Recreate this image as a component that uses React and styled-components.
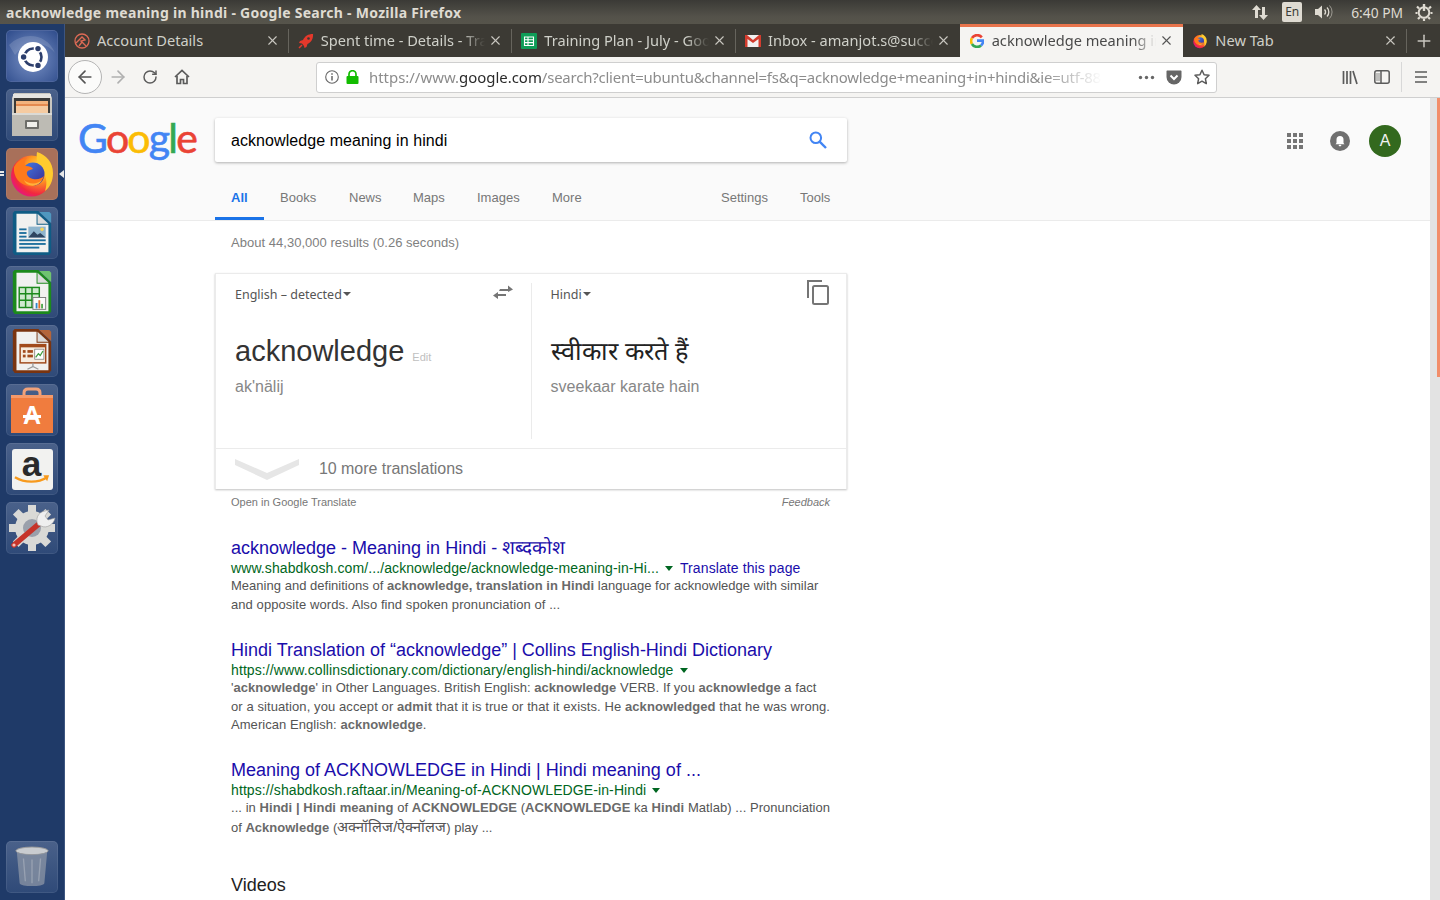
import React from 'react'
import styled, { createGlobalStyle } from 'styled-components'
import { X, Plus, ArrowLeft, ArrowRight, RotateCw } from 'lucide-react'

const GlobalStyle = createGlobalStyle`
html, body {
  margin: 0;
  padding: 0;
  overflow: hidden;
}
* { box-sizing: border-box; }
`

const UI_FONT = `"Noto Sans", "Open Sans", sans-serif`
const PAGE_FONT = `"Liberation Sans", Arial, sans-serif`

const Screen = styled.div`
width: 1440px;
height: 900px;
overflow: hidden;
display: flex;
flex-direction: column;
background: #fff;
font-family: ${PAGE_FONT};
`

/* ---------- ubuntu top panel ---------- */
const Panel = styled.div`
height: 24px;
flex: none;
display: flex;
align-items: center;
justify-content: space-between;
padding: 0 3px 0 6px;
background: linear-gradient(#3b3a36, #54524a 70%, #56544b);
`
const WindowTitle = styled.div`
font-family: ${UI_FONT};
font-size: 14px;
font-weight: 700;
letter-spacing: 0.28px;
color: #dfdbd2;
white-space: nowrap;
`
const Indicators = styled.div`
display: flex;
align-items: center;
`
const Indicator = styled.div`
width: ${p => p.$w}px;
height: 24px;
margin-left: ${p => p.$ml || 0}px;
display: flex;
align-items: center;
justify-content: center;
`
const LangBox = styled.div`
width: 20px;
height: 20px;
border-radius: 2px;
background: #dfdbd2;
color: #3c3b37;
font-family: ${UI_FONT};
font-size: 12px;
text-align: center;
line-height: 20px;
`
const Clock = styled.div`
font-family: ${UI_FONT};
font-size: 13.8px;
color: #dfdbd2;
white-space: nowrap;
margin: 0 8px 0 10px;
`

const Body = styled.div`
flex: 1;
display: flex;
min-height: 0;
`

/* ---------- launcher ---------- */
const Launcher = styled.div`
width: 65px;
flex: none;
display: flex;
flex-direction: column;
align-items: flex-start;
gap: 7px;
padding: 6px 0 6px 6px;
background: #1f3a68;
border-right: 1px solid #3d5580;
`
const Tile = styled.div`
position: relative;
width: 52px;
height: 52px;
flex: none;
border-radius: 5px;
background: ${p => p.$bg || 'linear-gradient(#4a618a, #2f4a78)'};
box-shadow: inset 0 0 0 1px rgba(255,255,255,0.08);
display: flex;
align-items: center;
justify-content: center;
`
const TrashTile = styled(Tile)`
margin-top: auto;
margin-bottom: 1px;
`
const RunDots = styled.div`
position: absolute;
left: -6px;
top: 23px;
width: 4px;
height: 6px;
background: repeating-linear-gradient(#e8e8e8 0 2px, transparent 2px 3px);
`
const ActiveArrow = styled.div`
position: absolute;
right: -6px;
top: 22px;
width: 0;
height: 0;
border-top: 4px solid transparent;
border-bottom: 4px solid transparent;
border-right: 5px solid #e8e8e8;
`

/* ---------- firefox chrome ---------- */
const Browser = styled.div`
flex: 1;
min-width: 0;
display: flex;
flex-direction: column;
`
const TabStrip = styled.div`
height: 33px;
flex: none;
display: flex;
background: #3c3a34;
`
const Tab = styled.div`
flex: 1 1 0;
min-width: 0;
height: 33px;
display: flex;
align-items: center;
gap: 7px;
padding: 0 9px ${p => (p.$active ? 3 : 0)}px 9px;
position: relative;
background: ${p => (p.$active ? '#f5f4f2' : 'transparent')};
border-top: ${p => (p.$active ? '3px solid #e8744c' : 'none')};
&::after {
  content: '';
  display: ${p => (p.$noSep ? 'none' : 'block')};
  position: absolute;
  right: 0;
  top: 5px;
  bottom: 4px;
  width: 1px;
  background: #66645d;
}
`
const TabIcon = styled.div`
width: 16px;
height: 16px;
flex: none;
margin-left: ${p => p.$ml || 0}px;
display: flex;
align-items: center;
justify-content: center;
`
const TabTitle = styled.div`
flex: 1;
min-width: 0;
margin: 0 -4px 2px 0;
overflow: hidden;
white-space: nowrap;
font-family: ${UI_FONT};
font-size: 14.6px;
color: ${p => (p.$active ? '#4a4a4a' : '#cfd0c9')};
-webkit-mask-image: ${p => (p.$fade ? 'linear-gradient(to right, #000 86%, transparent 100%)' : 'none')};
mask-image: ${p => (p.$fade ? 'linear-gradient(to right, #000 86%, transparent 100%)' : 'none')};
`
const NewTab = styled.div`
width: 33px;
flex: none;
display: flex;
align-items: center;
justify-content: center;
color: #c8c6bf;
`

const Toolbar = styled.div`
height: 41px;
flex: none;
display: flex;
align-items: center;
padding: 0 3px;
background: #f5f4f2;
border-bottom: 1px solid #cfcfcf;
`
const BackButton = styled.div`
width: 34px;
height: 34px;
flex: none;
border-radius: 50%;
border: 1px solid #b4b4b4;
background: #fbfbfa;
display: flex;
align-items: center;
justify-content: center;
color: #555;
`
const ToolButton = styled.div`
width: 32px;
height: 32px;
flex: none;
display: flex;
align-items: center;
justify-content: center;
color: ${p => p.$color || '#5b5b5b'};
`
const ToolSpacer = styled.div`
width: 118px;
flex: none;
`
const UrlBar = styled.div`
width: 901px;
height: 31px;
flex: none;
display: flex;
align-items: center;
background: #fff;
border: 1px solid #cfcfcf;
border-radius: 3px;
padding: 0 0 0 8px;
`
const UrlText = styled.div`
flex: 1;
min-width: 0;
margin: 0 30px 0 9px;
overflow: hidden;
white-space: nowrap;
font-family: ${UI_FONT};
font-size: 14.93px;
color: #8c8c8c;
-webkit-mask-image: linear-gradient(to right, #000 92%, transparent 100%);
mask-image: linear-gradient(to right, #000 92%, transparent 100%);
b { font-weight: 400; color: #2a2a2a; }
`
const UrlPath = styled.span`
letter-spacing: -0.2px;
`
const UrlAction = styled.div`
width: 28px;
height: 28px;
flex: none;
display: flex;
align-items: center;
justify-content: center;
`
const Grow = styled.div`
flex: 1;
`
const ToolSep = styled.div`
width: 1px;
height: 30px;
flex: none;
margin: 0 3px;
background: #d8d8d8;
`

/* ---------- page ---------- */
const PageArea = styled.div`
flex: 1;
min-height: 0;
display: flex;
`
const Page = styled.div`
flex: 1;
min-width: 0;
overflow: hidden;
`
const Scrollbar = styled.div`
width: 10px;
flex: none;
display: flex;
justify-content: flex-end;
background: #e3e3e3;
`
const ScrollThumb = styled.div`
width: 3px;
height: 279px;
background: #f28e6b;
`
const Header = styled.div`
height: 123px;
background: #fafafa;
border-bottom: 1px solid #ebebeb;
display: flex;
flex-direction: column;
`
const HeaderTop = styled.div`
display: flex;
align-items: flex-start;
padding-top: 20px;
height: 92px;
`
const Logo = styled.div`
width: 150px;
flex: none;
padding-left: 13px;
margin-top: -4px;
font-family: Lato, sans-serif;
font-size: 41px;
line-height: 48px;
letter-spacing: -1.8px;
-webkit-text-stroke: 0.6px;
white-space: nowrap;
`
const LogoLetter = styled.span`
color: ${p => p.$c};
`
const SearchBox = styled.div`
width: 632px;
height: 44px;
flex: none;
display: flex;
align-items: center;
justify-content: space-between;
padding: 0 19px 0 16px;
background: #fff;
border-radius: 2px;
box-shadow: 0 1px 3px rgba(0,0,0,0.3);
font-size: 16px;
color: #000;
`
const SearchText = styled.span`
margin-top: 2px;
letter-spacing: 0.07px;
`
const AccountIcons = styled.div`
flex: 1;
display: flex;
align-items: center;
justify-content: flex-end;
height: 44px;
margin: 1px 29px 0 0;
`
const AppsGrid = styled.div`
width: 16px;
height: 16px;
display: grid;
grid-template-columns: repeat(3, 4px);
grid-auto-rows: 4px;
gap: 2px;
margin-right: 27px;
span { background: #757575; }
`
const Bell = styled.div`
width: 20px;
height: 20px;
border-radius: 50%;
background: #707070;
display: flex;
align-items: center;
justify-content: center;
margin-right: 19px;
`
const Avatar = styled.div`
width: 32px;
height: 32px;
border-radius: 50%;
background: #33691e;
color: #f2f2f2;
font-size: 16px;
display: flex;
align-items: center;
justify-content: center;
`
const Nav = styled.div`
display: flex;
height: 30px;
padding-left: 150px;
font-size: 13px;
color: #777;
`
const NavItem = styled.div`
width: ${p => p.$w}px;
padding-left: 16px;
margin-left: ${p => p.$ml || 0}px;
height: 30px;
font-weight: ${p => (p.$active ? 700 : 400)};
color: ${p => (p.$active ? '#1a73e8' : '#777')};
border-bottom: ${p => (p.$active ? '3px solid #1a73e8' : 'none')};
line-height: 15px;
white-space: nowrap;
`
const Column = styled.div`
width: 782px;
padding-left: 150px;
`
const Stats = styled.div`
height: 52px;
padding: 14px 0 0 16px;
font-size: 13px;
line-height: 15px;
letter-spacing: 0.03px;
color: #808080;
`
const Card = styled.div`
width: 632px;
height: 216px;
background: #fff;
border: 1px solid #ebebeb;
border-bottom: none;
box-shadow: 0 1px 2px rgba(0,0,0,0.25);
display: flex;
flex-direction: column;
`
const CardMain = styled.div`
height: 175px;
flex: none;
display: flex;
border-bottom: 1px solid #ebebeb;
padding-top: 9px;
`
const CardPane = styled.div`
width: ${p => p.$w}px;
height: 156px;
padding: 0 0 0 ${p => p.$pad}px;
border-right: ${p => (p.$divider ? '1px solid #ebebeb' : 'none')};
position: relative;
`
const LangRow = styled.div`
display: flex;
align-items: center;
height: 22px;
font-family: ${UI_FONT};
font-size: 12.5px;
color: #555;
`
const Caret = styled.span`
width: 0;
height: 0;
margin-left: 1px;
border-left: 4px solid transparent;
border-right: 4px solid transparent;
border-top: 4px solid #555;
`
const PaneIcon = styled.div`
position: absolute;
top: ${p => p.$top}px;
right: ${p => p.$right}px;
display: flex;
`
const SourceRow = styled.div`
display: flex;
align-items: baseline;
gap: 8px;
margin-top: 26px;
height: 40px;
font-size: ${p => p.$size}px;
line-height: 40px;
color: ${p => p.$color};
`
const EditLink = styled.span`
font-size: 11px;
color: #c0c0c0;
`
const Translit = styled.div`
margin-top: 6px;
font-size: 16px;
line-height: 20px;
letter-spacing: 0.02px;
color: #878787;
`
const CardFooter = styled.div`
height: 41px;
display: flex;
align-items: center;
font-size: 16px;
letter-spacing: -0.05px;
color: #777;
padding-left: 18px;
gap: 19px;
`
const CardNotes = styled.div`
width: 632px;
height: 48px;
padding: 5px 17px 0 16px;
display: flex;
justify-content: space-between;
font-size: 11px;
line-height: 16px;
color: #777;
i { font-style: italic; }
`
const Result = styled.div`
width: 632px;
padding-left: 16px;
margin-bottom: ${p => p.$mb ?? 24}px;
`
const ResultTitle = styled.div`
font-size: 18px;
line-height: 22px;
color: #1a0dab;
white-space: nowrap;
`
const WideScript = styled.span`
font-size: ${p => p.$size}px;
`
const ResultUrl = styled.div`
display: flex;
align-items: center;
height: 18px;
font-size: 14px;
letter-spacing: 0.1px;
color: #006621;
white-space: nowrap;
`
const UrlCaret = styled.span`
width: 0;
height: 0;
margin: 1px 6px 0 6px;
border-left: 4px solid transparent;
border-right: 4px solid transparent;
border-top: 5px solid #006621;
`
const TranslateLink = styled.span`
color: #1a0dab;
margin-left: 1px;
`
const Snippet = styled.div`
font-size: 13px;
line-height: 18.6px;
color: #545454;
white-space: nowrap;
b { font-weight: 700; color: #6a6a6a; }
`
const SnippetLine = styled.div`
height: 18.6px;
letter-spacing: ${p => p.$ls || 0}px;
`
const SectionTitle = styled.div`
margin: 37px 0 0 16px;
font-size: 18px;
line-height: 24px;
color: #222;
`

/* ---------- launcher icons ---------- */
const UbuntuIcon = () => (
  <svg width="50" height="50" viewBox="0 0 50 50">
    <defs>
      <radialGradient id="ub" cx="50%" cy="55%" r="70%">
        <stop offset="0" stopColor="#7b93c7" />
        <stop offset="1" stopColor="#33508f" />
      </radialGradient>
    </defs>
    <rect x="0" y="0" width="50" height="50" rx="4" fill="url(#ub)" />
    <path d="M2 14C16 0 40 2 48 22C38 10 20 8 8 24Z" fill="#fff" opacity=".14" />
    <circle cx="26" cy="26" r="15" fill="#fff" />
    <circle cx="26" cy="26" r="8.5" fill="none" stroke="#2c3e6c" strokeWidth="2.6" />
    <circle cx="17" cy="26" r="3.9" fill="#fff" />
    <circle cx="30.6" cy="18" r="3.9" fill="#fff" />
    <circle cx="30.6" cy="34" r="3.9" fill="#fff" />
    <circle cx="16.6" cy="26" r="2.7" fill="#2c3e6c" />
    <circle cx="31" cy="17.6" r="2.7" fill="#2c3e6c" />
    <circle cx="31" cy="34.4" r="2.7" fill="#2c3e6c" />
  </svg>
)
const FilesIcon = () => (
  <svg width="42" height="44" viewBox="0 0 42 44">
    <path d="M3 0h36l2 5v36l-1 2H2l-1-2V5z" fill="#c9c7c0" />
    <rect x="2" y="1" width="38" height="4" fill="#e6e5e0" />
    <rect x="3" y="5" width="36" height="15" fill="#3a3a38" />
    <rect x="5" y="8" width="32" height="3" fill="#f2b37e" />
    <rect x="5" y="11" width="32" height="2" fill="#e48a50" />
    <rect x="5" y="13" width="32" height="7" fill="#f5cba1" />
    <rect x="1" y="20" width="40" height="23" fill="#bdbbb4" />
    <rect x="1" y="20" width="40" height="2" fill="#dbdad5" />
    <rect x="14" y="27" width="14" height="9" rx="1" fill="#6e6e6a" />
    <rect x="16" y="29" width="10" height="5" fill="#f1f0ec" />
  </svg>
)
const FirefoxIcon = ({ size = 50, id = 'ff' }) => (
  <svg width={size} height={size} viewBox="0 0 50 50">
    <defs>
      <radialGradient id={id + 'a'} cx="70%" cy="30%" r="80%">
        <stop offset="0" stopColor="#ffe14a" />
        <stop offset=".4" stopColor="#ff9a1f" />
        <stop offset=".8" stopColor="#f1283f" />
        <stop offset="1" stopColor="#e31587" />
      </radialGradient>
      <linearGradient id={id + 'b'} x1="0" y1="0" x2="1" y2="1">
        <stop offset="0" stopColor="#3f7fe8" />
        <stop offset="1" stopColor="#3b2a90" />
      </linearGradient>
    </defs>
    <circle cx="24.5" cy="27" r="20.5" fill={`url(#${id}a)`} />
    <path d="M30 3c9 3 16 10 16 21 0 8-3 14-8 18 2-6 2-12-1-17-2-4-6-7-7-12-.5-3-.5-7 0-10z" fill="#ffcb2e" />
    <circle cx="26" cy="25" r="11.5" fill={`url(#${id}b)`} />
    <path d="M7 18c3-6 9-9 13-9-3 3-3 6-1 8 3 0 6 1 7 3-2 1-5 1-6 3-1 3 2 6 6 7 5 1 9-1 11-3-2 6-8 11-15 10-9-1-16-9-15-19z" fill="#ff7a1a" />
    <path d="M17 31c4 4 13 5 18 0-3 7-15 8-18 0z" fill="#ffb13b" />
  </svg>
)
const DocIcon = ({ border, corner, children }) => (
  <svg width="42" height="50" viewBox="0 0 46 50">
    <path d="M4 1h26l14 14v31l-2 3H4l-2-3V3z" fill={border} />
    <path d="M6 4h22v12h13v30H6z" fill="#f1f1f0" />
    <path d="M31 2l13 12V4l-2-2z" fill={corner} />
    <path d="M29 4l12 11H29z" fill="#dcdcdc" />
    {children}
  </svg>
)
const WriterIcon = () => (
  <DocIcon border="#0f5c85" corner="#4f97bf">
    <g fill="#1b6d9c">
      <rect x="9" y="20" width="8" height="2" />
      <rect x="9" y="24" width="8" height="2" />
      <rect x="9" y="28" width="8" height="2" />
      <rect x="9" y="32" width="29" height="2" />
      <rect x="9" y="36" width="29" height="2" />
      <rect x="9" y="40" width="22" height="2" />
    </g>
    <rect x="19" y="18" width="19" height="12" fill="#8fb5cd" />
    <path d="M19 30l6-7 4 4 3-2 6 5z" fill="#2e4560" />
    <circle cx="34" cy="21" r="2" fill="#f4d35e" />
  </DocIcon>
)
const CalcIcon = () => (
  <DocIcon border="#1c8a1c" corner="#6fc46f">
    <g stroke="#1c8a1c" strokeWidth="1.6" fill="#cfe9cf">
      <rect x="9" y="20" width="22" height="22" />
      <path d="M9 27h22M9 34h22M16 20v22M23 20v22" fill="none" />
    </g>
    <rect x="24" y="31" width="14" height="13" fill="#fafafa" stroke="#777" />
    <rect x="27" y="37" width="2" height="6" fill="#2f86c9" />
    <rect x="30" y="34" width="2" height="9" fill="#e2702c" />
    <rect x="33" y="38" width="2" height="5" fill="#4da64d" />
  </DocIcon>
)
const ImpressIcon = () => (
  <DocIcon border="#7a3410" corner="#b5653a">
    <rect x="10" y="18" width="28" height="20" fill="#f7ecdf" stroke="#a14a1c" strokeWidth="1.6" />
    <rect x="10" y="18" width="28" height="3" fill="#a14a1c" />
    <g fill="#a14a1c">
      <rect x="13" y="24" width="3" height="3" />
      <rect x="13" y="29" width="3" height="3" />
      <rect x="18" y="24" width="6" height="3" />
      <rect x="18" y="29" width="6" height="3" />
    </g>
    <rect x="26" y="23" width="10" height="11" fill="#fff" stroke="#777" strokeWidth=".8" />
    <path d="M27 32l3-4 2 2 3-5" fill="none" stroke="#3f9c3f" strokeWidth="1.4" />
    <path d="M24 38v4l-6 3M24 42l6 3" stroke="#9a9a9a" strokeWidth="1.4" fill="none" />
  </DocIcon>
)
const SoftwareIcon = () => (
  <svg width="42" height="46" viewBox="0 0 42 46">
    <path d="M13 12V6c0-3 2-4 4-4h8c2 0 4 1 4 4v6" fill="none" stroke="#f0a27a" strokeWidth="3" />
    <rect x="0" y="8" width="42" height="38" fill="#f07c3e" />
    <rect x="0" y="8" width="42" height="3" fill="#f59a6a" />
    <text x="21" y="37" textAnchor="middle" fontFamily="Liberation Sans" fontWeight="700" fontSize="25" fill="#fff">A</text>
    <rect x="12" y="28" width="18" height="3" fill="#fff" />
  </svg>
)
const AmazonIcon = () => (
  <svg width="41" height="41" viewBox="0 0 42 42" overflow="visible">
    <rect width="42" height="42" rx="3" fill="#f2f2f0" />
    <text x="20" y="28" textAnchor="middle" fontFamily="Liberation Sans" fontWeight="700" fontSize="36" fill="#2a2a2a">a</text>
    <path d="M3 29c10 6 24 6 33 0" fill="none" stroke="#f79a1d" strokeWidth="2.4" />
    <path d="M32 27l6 0-2 6z" fill="#f79a1d" />
  </svg>
)
const SettingsIcon = () => (
  <svg width="48" height="48" viewBox="0 0 48 48">
    <g fill="#d9d9d6">
      <circle cx="24" cy="24" r="17" />
      {[0, 45, 90, 135, 180, 225, 270, 315].map(a => (
        <rect key={a} x="20" y="1" width="8" height="8" transform={`rotate(${a} 24 24)`} />
      ))}
    </g>
    <circle cx="24" cy="24" r="9" fill="#9aa0ab" />
    <path d="M6 41L32 19" stroke="#c6342a" strokeWidth="5.5" strokeLinecap="round" />
    <circle cx="6" cy="41" r="1.6" fill="#f4c0bb" />
    <path d="M30 21c-3-6 0-13 7-14l4-1-4 6 3 4 7-2c-1 6-8 11-14 8z" fill="#efefef" stroke="#9a9a9a" strokeWidth=".6" />
  </svg>
)
const TrashIcon = () => (
  <svg width="38" height="46" viewBox="0 0 40 46">
    <ellipse cx="20" cy="6" rx="17" ry="4" fill="#c9ccd0" stroke="#9a9a9a" />
    <path d="M4 7l3 33c1 4 25 4 26 0l3-33c-4 4-28 4-32 0z" fill="#8c96a6" opacity=".75" />
    <path d="M11 14l2 24M20 15v25M29 14l-2 24" stroke="#b7bdc7" strokeWidth="1.4" opacity=".5" />
  </svg>
)

/* ---------- tab and toolbar icons ---------- */
const AccountFav = () => (
  <svg width="16" height="16" viewBox="0 0 16 16" fill="none" stroke="#dd6a55" strokeWidth="1.3">
    <circle cx="8" cy="8" r="7" />
    <path d="M2 10l6-6 3 3-4 1 5 5M5 13l3-4" />
  </svg>
)
const RocketFav = () => (
  <svg width="16" height="16" viewBox="0 0 16 16">
    <path d="M15 1c-5 0-8 2-10 6L2 8 1 10l3 .5L6 13l.5 2 2-1 1-3c4-2 6-5 5.5-11z" fill="#e5382b" />
    <circle cx="10.5" cy="5.5" r="1.3" fill="#3c3a34" />
    <path d="M1 15l3-3" stroke="#e5382b" strokeWidth="1.5" />
  </svg>
)
const SheetFav = () => (
  <svg width="16" height="16" viewBox="0 0 16 16">
    <rect width="16" height="16" rx="1" fill="#0f9d58" />
    <path d="M3.5 4h9v8.5h-9zM3.5 6.8h9M3.5 9.6h9M7 4v8.5" fill="none" stroke="#fff" strokeWidth="1.1" />
  </svg>
)
const GmailFav = () => (
  <svg width="16" height="14" viewBox="0 0 16 14">
    <rect y="1" width="16" height="12" fill="#f1f1f1" />
    <path d="M0 1h2l6 5 6-5h2v12h-2.5V5L8 9 2.5 5v8H0z" fill="#d23c2e" />
  </svg>
)
const GoogleFav = () => (
  <svg width="14" height="14" viewBox="0 0 16 16" fill="none" strokeWidth="3">
    <path d="M13.5 3.8A7 7 0 0 0 2.2 4.6" stroke="#ea4335" />
    <path d="M2.2 4.6a7 7 0 0 0 0 6.8" stroke="#fbbc05" />
    <path d="M2.2 11.4a7 7 0 0 0 10.4 1.8" stroke="#34a853" />
    <path d="M12.6 13.2A7 7 0 0 0 15 7.5H8" stroke="#4285f4" />
  </svg>
)
const NetArrows = () => (
  <svg width="18" height="18" viewBox="0 0 18 18" fill="#dfdbd2">
    <path d="M5.5 2L1 7h3v8h3V7h3z" />
    <path d="M12.5 17L8 12h3V4h3v8h3z" />
  </svg>
)
const Speaker = () => (
  <svg width="20" height="16" viewBox="0 0 20 16" fill="none" stroke="#dfdbd2">
    <path d="M1 5h3l4-3.5v13L4 11H1z" fill="#dfdbd2" stroke="none" />
    <path d="M10.5 5.5a3.5 3.5 0 0 1 0 5" strokeWidth="1.4" />
    <path d="M13 3.5a6.5 6.5 0 0 1 0 9" strokeWidth="1.3" />
    <path d="M15.5 1.5a9.5 9.5 0 0 1 0 13" strokeWidth="1" opacity=".55" />
  </svg>
)
const PowerGear = () => (
  <svg width="18" height="18" viewBox="0 0 18 18" fill="none" stroke="#dfdbd2">
    <circle cx="9" cy="9.5" r="5.3" strokeWidth="2" />
    <path d="M9 1v7" strokeWidth="2.4" />
    <g strokeWidth="2.2">
      <path d="M2 3.5l2 2M16 3.5l-2 2M0.5 10h2M15.5 10h2M3 16l1.8-1.8M15 16l-1.8-1.8M9 15.5V18" />
    </g>
  </svg>
)
const HomeIcon = () => (
  <svg width="16" height="16" viewBox="0 0 16 16" fill="none" stroke="#5b5b5b" strokeWidth="1.7">
    <path d="M1 8l7-6.5L15 8" />
    <path d="M3 7v7.5h3.5v-4h3v4H13V7" />
  </svg>
)
const InfoIcon = () => (
  <svg width="14" height="14" viewBox="0 0 14 14" fill="none" stroke="#666">
    <circle cx="7" cy="7" r="6.3" strokeWidth="1.1" />
    <path d="M7 6v4.5M7 3.3v1.5" strokeWidth="1.5" />
  </svg>
)
const LockIcon = () => (
  <svg width="13" height="14" viewBox="0 0 13 14">
    <path d="M3 6V4.2a3.5 3.5 0 0 1 7 0V6" fill="none" stroke="#12bc00" strokeWidth="1.7" />
    <rect x="0.5" y="6" width="12" height="8" rx="1" fill="#12bc00" />
  </svg>
)
const MoreDots = () => (
  <svg width="17" height="5" viewBox="0 0 17 5" fill="#666">
    <circle cx="2.5" cy="2.5" r="1.7" />
    <circle cx="8.5" cy="2.5" r="1.7" />
    <circle cx="14.5" cy="2.5" r="1.7" />
  </svg>
)
const PocketIcon = () => (
  <svg width="16" height="15" viewBox="0 0 16 15">
    <path d="M1.5 0.5h13c.6 0 1 .4 1 1V7a7.5 7.5 0 0 1-15 0V1.5c0-.6.4-1 1-1z" fill="#666" />
    <path d="M4.5 5.5L8 9l3.5-3.5" fill="none" stroke="#fff" strokeWidth="2" />
  </svg>
)
const StarIcon = () => (
  <svg width="16" height="16" viewBox="0 0 16 16" fill="none" stroke="#5b5b5b" strokeWidth="1.5" strokeLinejoin="round">
    <path d="M8 1.2l2.1 4.5 4.9.6-3.6 3.4.9 4.9L8 12.2l-4.3 2.4.9-4.9L1 6.3l4.9-.6z" />
  </svg>
)
const LibraryIcon = () => (
  <svg width="16" height="15" viewBox="0 0 16 15" fill="none" stroke="#5b5b5b" strokeWidth="1.7">
    <path d="M1.5 1v13M5 1v13M8.5 1v13M11 1l4 13" />
  </svg>
)
const SidebarIcon = () => (
  <svg width="16" height="14" viewBox="0 0 16 14" fill="none" stroke="#5b5b5b" strokeWidth="1.5">
    <rect x="0.8" y="0.8" width="14.4" height="12.4" rx="2" />
    <path d="M7 1v12" />
    <path d="M2 3h4v8H2z" fill="#5b5b5b" stroke="none" opacity=".35" />
  </svg>
)
const MenuIcon = () => (
  <svg width="14" height="12" viewBox="0 0 14 12" fill="none" stroke="#5b5b5b" strokeWidth="1.7">
    <path d="M1 1h12M1 6h12M1 11h12" />
  </svg>
)
const SearchIcon = () => (
  <svg width="20" height="20" viewBox="0 0 20 20" fill="none" stroke="#4285f4" strokeWidth="2">
    <circle cx="7.8" cy="7.8" r="5.3" />
    <path d="M11.6 11.6l6.4 6.4" strokeWidth="2.4" />
  </svg>
)
const BellIcon = () => (
  <svg width="12" height="12" viewBox="0 0 12 12" fill="#fff">
    <path d="M6 1a3.5 3.5 0 0 0-3.5 3.5V8L1.5 9.2h9L9.5 8V4.5A3.5 3.5 0 0 0 6 1z" />
    <rect x="4.7" y="9.8" width="2.6" height="1.5" rx=".7" />
  </svg>
)
const SwapIcon = () => (
  <svg width="22" height="15" viewBox="0 0 22 15" fill="#757575">
    <path d="M8 5h8V1.5L21 5.5 16 8V7H7z" transform="translate(0 -1)" />
    <path d="M14 9H6V7L1 10.5 6 14v-3h8z" />
  </svg>
)
const CopyIcon = () => (
  <svg width="22" height="25" viewBox="0 0 22 25" fill="none" stroke="#757575" strokeWidth="2">
    <path d="M1 18V1h14" />
    <rect x="6" y="6" width="15" height="18" rx="1.5" />
  </svg>
)
const Chevron = () => (
  <svg width="66" height="22" viewBox="0 0 66 22" fill="#e6e6e6">
    <path d="M1 1l32 14L65 1v6L33 22 1 7z" />
  </svg>
)

const tabs = [
  { title: 'Account Details', icon: <AccountFav /> },
  { title: 'Spent time - Details - Training', icon: <RocketFav />, fade: true },
  { title: 'Training Plan - July - Google Sheets', icon: <SheetFav />, fade: true },
  { title: 'Inbox - amanjot.s@successive.tech', icon: <GmailFav />, fade: true },
  { title: 'acknowledge meaning in hindi', icon: <GoogleFav />, fade: true, active: true },
  { title: 'New Tab', icon: <FirefoxIcon size={16} id="fft" /> },
]

const navItems = [
  { label: 'All', w: 49, active: true },
  { label: 'Books', w: 69 },
  { label: 'News', w: 64 },
  { label: 'Maps', w: 64 },
  { label: 'Images', w: 75 },
  { label: 'More', w: 100 },
  { label: 'Settings', w: 79, ml: 69 },
  { label: 'Tools', w: 60 },
]

const App = () => {
  return (
    <Screen>
      <GlobalStyle />
      <Panel>
        <WindowTitle>acknowledge meaning in hindi - Google Search - Mozilla Firefox</WindowTitle>
        <Indicators>
          <Indicator $w={26}><NetArrows /></Indicator>
          <Indicator $w={24} $ml={7}><LangBox>En</LangBox></Indicator>
          <Indicator $w={34} $ml={3}><Speaker /></Indicator>
          <Clock>6:40 PM</Clock>
          <Indicator $w={26}><PowerGear /></Indicator>
        </Indicators>
      </Panel>
      <Body>
        <Launcher>
          <Tile $bg="#3f5a96"><UbuntuIcon /></Tile>
          <Tile><FilesIcon /></Tile>
          <Tile $bg="#a8705a">
            <RunDots />
            <FirefoxIcon id="ffl" />
            <ActiveArrow />
          </Tile>
          <Tile><WriterIcon /></Tile>
          <Tile><CalcIcon /></Tile>
          <Tile><ImpressIcon /></Tile>
          <Tile><SoftwareIcon /></Tile>
          <Tile><AmazonIcon /></Tile>
          <Tile><SettingsIcon /></Tile>
          <TrashTile><TrashIcon /></TrashTile>
        </Launcher>
        <Browser>
          <TabStrip>
            {tabs.map((t, i) => (
              <Tab key={i} $active={t.active} $noSep={t.active || i === 3}>
                <TabIcon>{t.icon}</TabIcon>
                <TabTitle $active={t.active} $fade={t.fade}>{t.title}</TabTitle>
                <X size={15} strokeWidth={1.8} color={t.active ? '#555' : '#c9c7c0'} />
              </Tab>
            ))}
            <NewTab><Plus size={20} strokeWidth={1.8} /></NewTab>
          </TabStrip>
          <Toolbar>
            <BackButton><ArrowLeft size={20} strokeWidth={2} /></BackButton>
            <ToolButton $color="#b0b0b0"><ArrowRight size={20} strokeWidth={2} /></ToolButton>
            <ToolButton><RotateCw size={16} strokeWidth={2.2} /></ToolButton>
            <ToolButton><HomeIcon /></ToolButton>
            <ToolSpacer />
            <UrlBar>
              <InfoIcon />
              <TabIcon $ml={5}><LockIcon /></TabIcon>
              <UrlText>https://www.<b>google.com</b><UrlPath>/search?client=ubuntu&amp;channel=fs&amp;q=acknowledge+meaning+in+hindi&amp;ie=utf-88</UrlPath></UrlText>
              <UrlAction><MoreDots /></UrlAction>
              <UrlAction><PocketIcon /></UrlAction>
              <UrlAction><StarIcon /></UrlAction>
            </UrlBar>
            <Grow />
            <ToolButton><LibraryIcon /></ToolButton>
            <ToolButton><SidebarIcon /></ToolButton>
            <ToolSep />
            <ToolButton><MenuIcon /></ToolButton>
          </Toolbar>
          <PageArea>
            <Page>
              <Header>
                <HeaderTop>
                  <Logo>
                    <LogoLetter $c="#4285f4">G</LogoLetter>
                    <LogoLetter $c="#ea4335">o</LogoLetter>
                    <LogoLetter $c="#fbbc05">o</LogoLetter>
                    <LogoLetter $c="#4285f4">g</LogoLetter>
                    <LogoLetter $c="#34a853">l</LogoLetter>
                    <LogoLetter $c="#ea4335">e</LogoLetter>
                  </Logo>
                  <SearchBox>
                    <SearchText>acknowledge meaning in hindi</SearchText>
                    <SearchIcon />
                  </SearchBox>
                  <AccountIcons>
                    <AppsGrid>
                      {Array.from({ length: 9 }).map((_, i) => <span key={i} />)}
                    </AppsGrid>
                    <Bell><BellIcon /></Bell>
                    <Avatar>A</Avatar>
                  </AccountIcons>
                </HeaderTop>
                <Nav>
                  {navItems.map(n => (
                    <NavItem key={n.label} $w={n.w} $active={n.active} $ml={n.ml}>{n.label}</NavItem>
                  ))}
                </Nav>
              </Header>
              <Column>
                <Stats>About 44,30,000 results (0.26 seconds)</Stats>
                <Card>
                  <CardMain>
                    <CardPane $w={316} $pad={19} $divider>
                      <LangRow>English – detected<Caret /></LangRow>
                      <PaneIcon $top={2} $right={17}><SwapIcon /></PaneIcon>
                      <SourceRow $size={29} $color="#333">acknowledge<EditLink>Edit</EditLink></SourceRow>
                      <Translit>ak'nälij</Translit>
                    </CardPane>
                    <CardPane $w={315} $pad={19}>
                      <LangRow>Hindi<Caret /></LangRow>
                      <PaneIcon $top={-3} $right={17}><CopyIcon /></PaneIcon>
                      <SourceRow $size={25.3} $color="#222">स्वीकार करते हैं</SourceRow>
                      <Translit>sveekaar karate hain</Translit>
                    </CardPane>
                  </CardMain>
                  <CardFooter>
                    <Chevron />
                    10 more translations
                  </CardFooter>
                </Card>
                <CardNotes>
                  <span>Open in Google Translate</span>
                  <i>Feedback</i>
                </CardNotes>
                <Result $mb={25}>
                  <ResultTitle>acknowledge - Meaning in Hindi - <WideScript $size={19}>शब्दकोश</WideScript></ResultTitle>
                  <ResultUrl>
                    www.shabdkosh.com/.../acknowledge/acknowledge-meaning-in-Hi...
                    <UrlCaret />
                    <TranslateLink>Translate this page</TranslateLink>
                  </ResultUrl>
                  <Snippet>
                    <SnippetLine $ls={0.02}>Meaning and definitions of <b>acknowledge, translation in Hindi</b> language for acknowledge with similar</SnippetLine>
                    <SnippetLine $ls={0.07}>and opposite words. Also find spoken pronunciation of ...</SnippetLine>
                  </Snippet>
                </Result>
                <Result>
                  <ResultTitle>Hindi Translation of “acknowledge” | Collins English-Hindi Dictionary</ResultTitle>
                  <ResultUrl>
                    https://www.collinsdictionary.com/dictionary/english-hindi/acknowledge
                    <UrlCaret />
                  </ResultUrl>
                  <Snippet>
                    <SnippetLine $ls={0.04}>'<b>acknowledge</b>' in Other Languages. British English: <b>acknowledge</b> VERB. If you <b>acknowledge</b> a fact</SnippetLine>
                    <SnippetLine $ls={0.09}>or a situation, you accept or <b>admit</b> that it is true or that it exists. He <b>acknowledged</b> that he was wrong.</SnippetLine>
                    <SnippetLine $ls={0.06}>American English: <b>acknowledge</b>.</SnippetLine>
                  </Snippet>
                </Result>
                <Result $mb={0}>
                  <ResultTitle>Meaning of ACKNOWLEDGE in Hindi | Hindi meaning of ...</ResultTitle>
                  <ResultUrl>
                    https://shabdkosh.raftaar.in/Meaning-of-ACKNOWLEDGE-in-Hindi
                    <UrlCaret />
                  </ResultUrl>
                  <Snippet>
                    <SnippetLine $ls={0.05}>... in <b>Hindi | Hindi meaning</b> of <b>ACKNOWLEDGE</b> (<b>ACKNOWLEDGE</b> ka <b>Hindi</b> Matlab) ... Pronunciation</SnippetLine>
                    <SnippetLine>of <b>Acknowledge</b> (<WideScript $size={14.5}>अक्नॉलिज/ऐक्नॉलज</WideScript>) play ...</SnippetLine>
                  </Snippet>
                </Result>
                <SectionTitle>Videos</SectionTitle>
              </Column>
            </Page>
            <Scrollbar><ScrollThumb /></Scrollbar>
          </PageArea>
        </Browser>
      </Body>
    </Screen>
  )
}

export default App
